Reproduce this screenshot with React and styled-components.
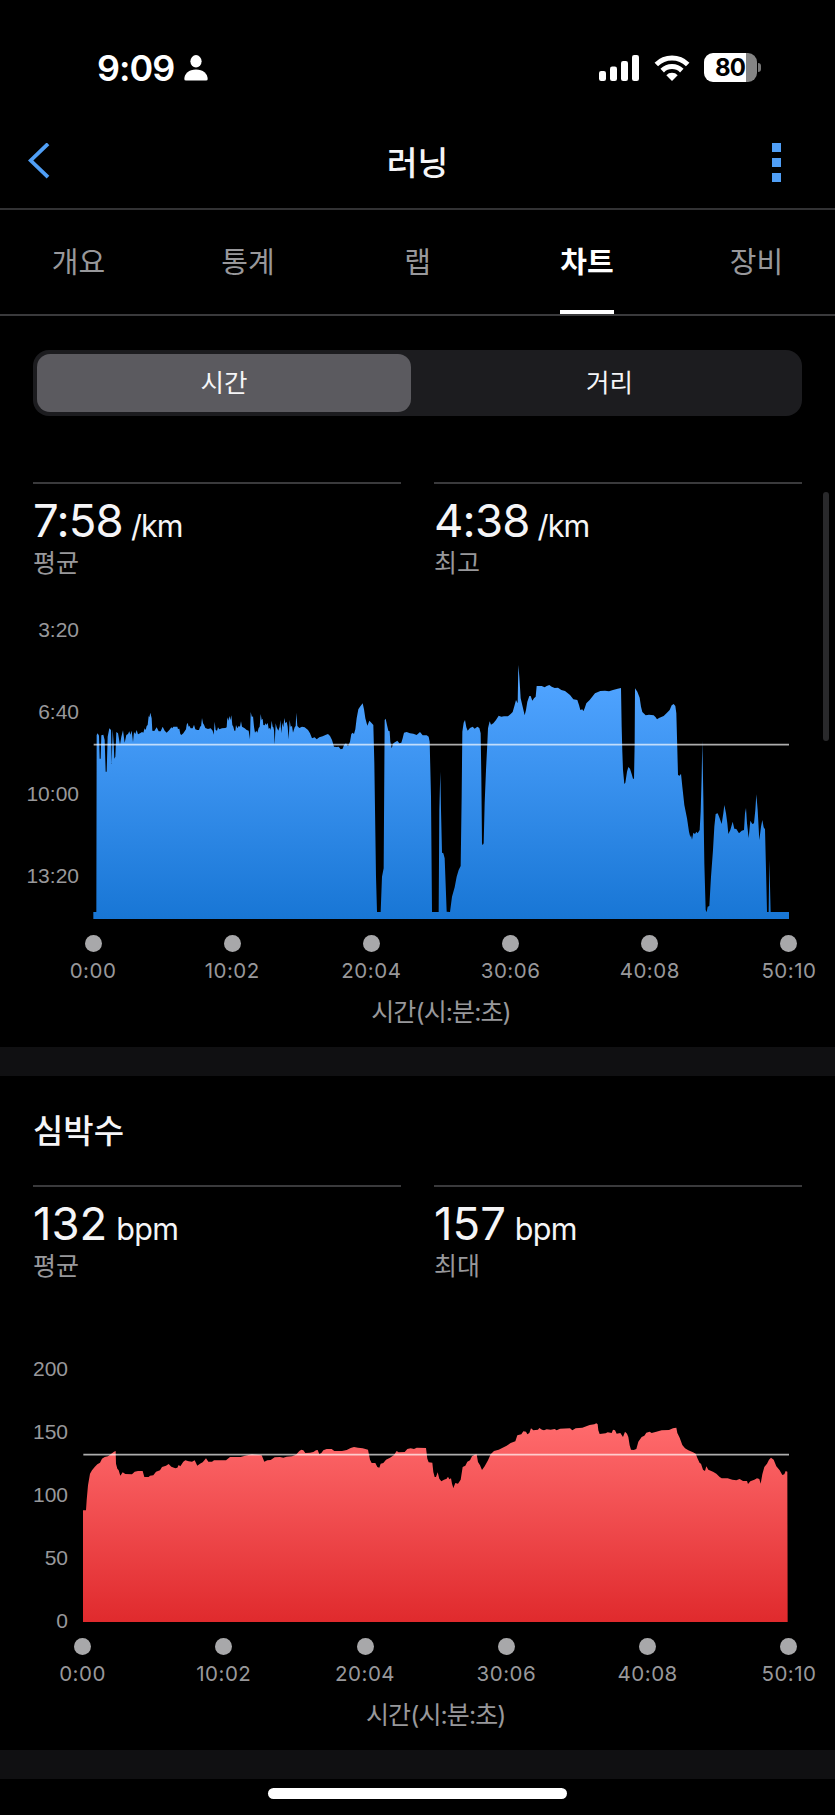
import React from 'react'
import styled, { createGlobalStyle } from 'styled-components'

const ticksX = ['0:00', '10:02', '20:04', '30:06', '40:08', '50:10']

const pace = {
  yLabels: ['3:20', '6:40', '10:00', '13:20'],
  stats: [
    { value: '7:58', unit: '/km', label: '평균' },
    { value: '4:38', unit: '/km', label: '최고' },
  ],
  // three samples per pixel
  points: `280,906 289,906 290,375 293,370 297,377 299,446 302,446 304,376 310,374 314,390 317,485 320,485
    323,380 328,355 333,360 335,462 338,358 341,400 343,446 346,440 349,366 354,370 360,404 364,380
    369,361 374,398 379,375 384,372 388,364 391,374 395,362 399,396 402,366 406,372 410,360 414,373
    420,370 426,366 430,368 434,355 437,360 440,348 443,345 446,318 448,322 451,308 455,325 457,362
    463,363 470,352 476,364 482,364 488,350 494,362 500,368 508,360 514,352 517,355 520,350 532,350
    534,357 538,356 541,372 544,375 550,370 558,358 560,344 563,338 566,350 568,347 572,355 578,355
    582,344 586,358 592,360 597,360 601,348 603,350 606,324 609,340 612,344 616,354 624,357 632,355
    638,362 641,374 644,335 647,360 651,362 654,352 658,358 666,355 676,354 680,352 682,322 685,332
    688,318 691,330 694,316 697,345 700,350 703,362 706,362 708,345 712,355 716,348 720,350 723,334
    726,350 734,355 740,360 746,362 750,388 752,306 756,322 759,318 762,350 765,368 769,362 772,368
    776,354 779,350 782,312 785,330 788,326 790,345 794,346 797,340 800,345 803,338 806,356 810,354
    812,360 815,332 818,350 820,352 822,360 824,404 827,340 830,352 835,362 839,350 841,330 844,370
    847,338 850,352 853,324 856,340 860,335 863,350 866,388 869,330 872,350 876,348 879,368 884,352
    887,348 889,308 892,348 898,354 906,350 914,352 924,360 930,370 936,385
    944,382 950,388 958,382 968,379 978,374 984,372 990,378 996,390 1002,410 1010,411 1016,410 1022,418
    1028,416 1032,405 1038,400 1044,409 1050,395 1054,372 1058,368 1062,372 1066,358 1070,325 1075,298
    1080,290 1088,280 1092,298 1096,325 1102,347 1108,332 1114,338 1120,345 1123,460 1128,800 1131,906
    1142,906 1146,800 1151,775 1154,330 1157,326 1161,345 1165,362 1169,364 1171,395 1175,415 1180,400
    1186,396 1192,392 1198,400 1204,398 1208,385 1212,368 1220,366 1230,370 1240,371 1250,375 1260,366
    1268,376 1280,376 1286,380 1289,395 1293,560 1296,906 1316,906 1318,600 1321,485 1323,600 1326,728
    1330,730 1334,745 1340,905 1350,906 1356,860 1364,832 1370,800 1376,780 1382,768 1385,560 1387,365
    1391,338 1395,330 1399,352 1403,362 1410,354 1418,350 1424,356 1432,350 1438,354 1442,370 1444,500
    1446,700 1448,706 1451,700 1454,580 1458,480 1462,400 1464,355 1469,334 1473,344 1480,340 1488,330
    1496,317 1504,320 1512,319 1524,319 1532,312 1538,306 1544,285 1548,270 1553,280 1555,165 1558,200
    1562,265 1568,290 1574,316 1578,300 1582,275 1588,258 1592,258 1597,272 1602,265 1607,260 1610,228
    1625,228 1634,232 1640,228 1648,225 1655,230 1664,234 1674,233 1684,240 1695,243 1710,255 1720,268
    1732,270 1737,285 1741,300 1747,298 1750,304 1754,295 1759,280 1769,270 1785,250 1801,243 1815,242
    1827,244 1839,240 1853,236 1863,234 1865,350 1867,425 1869,480 1873,522 1876,518 1881,485 1885,471
    1890,476 1895,492 1899,506 1902,506 1904,400 1905,235 1912,245 1919,263 1923,290 1927,306 1937,316
    1947,314 1961,316 1967,322 1971,328 1977,324 1991,318 2001,308 2009,300 2015,286 2021,282 2026,288
    2029,310 2032,420 2034,495 2039,497 2043,491 2047,530 2053,585 2061,625 2067,665 2071,682 2073,675
    2076,689 2080,668 2085,672 2089,665 2093,670 2099,660 2102,605 2105,500 2107,392 2110,560 2113,760
    2117,900 2120,906 2123,890 2128,888 2133,800 2139,720 2143,650 2147,612 2153,610 2159,625 2165,642
    2170,610 2173,585 2178,610 2182,640 2185,672 2191,660 2198,635 2203,656 2209,657 2217,670 2225,662
    2232,660 2235,610 2238,594 2241,640 2246,684 2251,632 2257,642 2262,640 2266,600 2269,553 2273,600
    2278,690 2283,650 2287,630 2291,652 2295,658 2298,780 2301,906 2306,906 2308,750 2312,906 2367,906
    2367,927 280,927`,
}

const heart = {
  yLabels: ['200', '150', '100', '50', '0'],
  stats: [
    { value: '132', unit: 'bpm', label: '평균' },
    { value: '157', unit: 'bpm', label: '최대' },
  ],
  points: `249,480 258,480 260,450 264,405 270,370 276,360 284,350 292,342 300,337 306,325 314,320 324,318
    332,312 342,304 347,302 348,340 352,355 356,360 361,376 368,366 376,371 396,372 404,364 414,362
    428,362 433,380 446,380 450,376 460,375 468,364 480,360 486,350 498,346 506,341 514,349 526,354
    532,352 536,344 541,348 550,334 556,330 566,333 576,334 584,330 592,346 600,340 608,336 618,324
    625,334 636,334 642,330 678,330 690,320 722,320 735,316 756,312 785,315 793,334 802,330 812,329
    824,321 840,320 850,322 860,319 876,318 888,313 898,302 904,298 910,300 916,308 930,307 940,305
    948,300 953,299 958,312 964,308 970,300 980,296 995,296 1003,302 1026,302 1040,299 1052,293
    1062,290 1074,292 1088,294 1104,298 1110,328 1115,338 1126,338 1132,350 1138,352 1142,340 1150,338
    1158,328 1170,322 1182,314 1190,302 1196,306 1214,305 1222,296 1232,294 1242,296 1250,292 1278,293
    1282,325 1286,336 1297,337 1300,365 1304,380 1308,380 1313,366 1318,385 1324,393 1332,388 1340,385
    1344,379 1348,387 1353,384 1356,400 1360,413 1366,398 1374,400 1382,388 1388,350 1396,346 1402,334
    1410,330 1416,318 1424,313 1430,312 1434,335 1440,345 1446,359 1454,348 1464,330 1472,312 1482,302
    1496,298 1508,292 1520,286 1532,278 1546,273 1552,255 1564,252 1570,243 1578,244 1582,252 1588,248
    1593,234 1600,240 1614,238 1618,233 1626,238 1632,240 1640,237 1652,238 1664,236 1670,240 1680,235
    1710,234 1717,240 1727,234 1747,232 1759,228 1769,224 1783,222 1789,219 1793,222 1795,240 1799,251
    1817,249 1823,246 1835,248 1839,238 1845,240 1850,250 1861,248 1869,260 1875,244 1881,250 1885,260
    1889,285 1893,298 1901,299 1909,296 1915,274 1925,260 1933,256 1939,247 1949,244 1955,248 1969,244
    1985,240 2007,239 2019,234 2029,232 2032,248 2039,262 2047,284 2055,294 2065,300 2079,306 2087,310
    2093,325 2099,338 2103,340 2109,358 2115,362 2119,348 2125,358 2139,364 2149,370 2159,380 2165,384
    2183,384 2197,388 2209,390 2219,386 2229,392 2241,392 2244,401 2251,393 2263,388 2271,384 2278,386
    2282,400 2287,372 2293,350 2301,340 2307,328 2313,322 2321,328 2329,348 2339,360 2347,374 2353,372
    2357,362 2362,364 2363,815 249,815`,
}

const Stats = ({ items, height, tight }) => (
  <StatRow $height={height}>
    {items.map((item) => (
      <Stat key={item.label}>
        <StatValue $tight={tight}>
          {item.value} <small>{item.unit}</small>
        </StatValue>
        <StatLabel>{item.label}</StatLabel>
      </Stat>
    ))}
  </StatRow>
)

const XAxis = ({ start }) => (
  <Axis $start={start}>
    <TickRow>
      {ticksX.map((tick) => (
        <Tick key={tick}>
          <Dot />
          <span>{tick}</span>
        </Tick>
      ))}
    </TickRow>
    <AxisTitle>시간(시:분:초)</AxisTitle>
  </Axis>
)

const App = () => {
  return (
    <Screen>
      <GlobalStyle />
      <StatusBar>
        <Clock>
          9:09
          <svg width='24' height='26' viewBox='0 0 24 26' fill='#fff'>
            <ellipse cx='12' cy='6.3' rx='5.6' ry='6.2' />
            <path d='M.3 24C.3 18.6 5 14.4 12 14.4S23.700 18.600 23.700 24Q23.700 25.600 22 25.600H2Q.3 25.600 .3 24Z' />
          </svg>
        </Clock>
        <StatusIcons>
          <svg width='41' height='28' viewBox='0 0 41 28' fill='#fff'>
            <rect x='0' y='17' width='7' height='10' rx='2.200' />
            <rect x='11' y='12.500' width='7' height='14.500' rx='2.200' />
            <rect x='22' y='7' width='7' height='20' rx='2.200' />
            <rect x='33' y='1' width='7' height='26' rx='2.200' />
          </svg>
          <svg width='36' height='28' viewBox='0 0 36 28'>
            <g fill='none' stroke='#fff' strokeWidth='5'>
              <path d='M2.300 10.500A22.500 22.500 0 0 1 33.700 10.500' />
              <path d='M8.200 16.600A14 14 0 0 1 27.800 16.600' />
            </g>
            <path d='M18 27L12.300 21.200A8 8 0 0 1 23.700 21.200Z' fill='#fff' />
          </svg>
          <Battery>
            <BatteryBody>80</BatteryBody>
            <BatteryCap />
          </Battery>
        </StatusIcons>
      </StatusBar>

      <NavBar>
        <svg width='22' height='38' viewBox='0 0 22 38' fill='none' stroke='#509ff6' strokeWidth='3.800'>
          <path d='M20 .8L2.700 17.500L20 34.200' />
        </svg>
        <h1>러닝</h1>
        <MenuDots>
          <i />
          <i />
          <i />
        </MenuDots>
      </NavBar>

      <Tabs>
        <Tab>개요</Tab>
        <Tab>통계</Tab>
        <Tab>랩</Tab>
        <Tab $active>차트</Tab>
        <Tab>장비</Tab>
      </Tabs>

      <Segmented>
        <Segment $active>시간</Segment>
        <Segment>거리</Segment>
      </Segmented>

      <Stats items={pace.stats} height={107} tight />
      <Chart $height={330}>
        <YAxis $width={79} $row={82}>
          {pace.yLabels.map((label) => (
            <span key={label}>{label}</span>
          ))}
        </YAxis>
        <svg width='696' height='259' viewBox='279 150 2088 777'>
          <defs>
            <linearGradient id='pace' gradientUnits='userSpaceOnUse' x1='0' y1='225' x2='0' y2='927'>
              <stop offset='0' stopColor='#4fa3ff' />
              <stop offset='1' stopColor='#1876d5' />
            </linearGradient>
          </defs>
          <polygon points={pace.points} fill='url(#pace)' />
          <path d='M281 404H2367' stroke='#fff' strokeOpacity='.68' strokeWidth='5' />
        </svg>
      </Chart>
      <XAxis start={93} />

      <Band />

      <SectionTitle>심박수</SectionTitle>
      <Stats items={heart.stats} height={152} />
      <Chart $height={285}>
        <YAxis $width={68} $row={63.1}>
          {heart.yLabels.map((label) => (
            <span key={label}>{label}</span>
          ))}
        </YAxis>
        <svg width='706' height='202' viewBox='249 209 2118 606'>
          <defs>
            <linearGradient id='heart' gradientUnits='userSpaceOnUse' x1='0' y1='219' x2='0' y2='815'>
              <stop offset='0' stopColor='#ff6b6d' />
              <stop offset='1' stopColor='#e02a2d' />
            </linearGradient>
          </defs>
          <polygon points={heart.points} fill='url(#heart)' />
          <path d='M250 313H2367' stroke='#fff' strokeOpacity='.68' strokeWidth='5' />
        </svg>
      </Chart>
      <XAxis start={82.5} />

      <Band />
      <HomeIndicator />
      <ScrollThumb />
    </Screen>
  )
}

const GlobalStyle = createGlobalStyle`
  * {
    box-sizing: border-box;
  }
  body {
    margin: 0;
    background: #000;
  }
`
const Screen = styled.div`
  position: relative;
  display: flex;
  flex-direction: column;
  width: 835px;
  height: 1815px;
  overflow: hidden;
  background: #000;
  color: #f5f5f7;
  font-family: Inter, 'Noto Sans CJK KR', sans-serif;
  svg {
    display: block;
    flex: none;
  }
`
const StatusBar = styled.header`
  display: flex;
  justify-content: space-between;
  align-items: center;
  height: 135px;
  padding: 0 74px 0 97px;
`
const Clock = styled.div`
  display: flex;
  align-items: center;
  gap: 10px;
  color: #fff;
  font-size: 36px;
  font-weight: 600;
  line-height: 36px;
  letter-spacing: -1px;
`
const StatusIcons = styled.div`
  display: flex;
  align-items: center;
  gap: 14px;
`
const Battery = styled.div`
  display: flex;
  align-items: center;
  gap: 1px;
`
const BatteryBody = styled.div`
  width: 53px;
  height: 29px;
  padding-right: 1px;
  border-radius: 9px;
  background: linear-gradient(90deg, #fff 42px, #848484 42px);
  color: #000;
  font-size: 24px;
  font-weight: 700;
  line-height: 29px;
  letter-spacing: -0.8px;
  text-align: center;
`
const BatteryCap = styled.div`
  width: 3px;
  height: 9px;
  border-radius: 0 3px 3px 0;
  background: #777;
`
const NavBar = styled.nav`
  display: flex;
  justify-content: space-between;
  align-items: center;
  height: 75px;
  padding: 0 54px 20px 28px;
  border-bottom: 2px solid #323234;
  h1 {
    margin: 2px 0 0 13px;
    font-size: 33.5px;
    font-weight: 500;
    line-height: 40px;
  }
`
const MenuDots = styled.div`
  display: grid;
  gap: 6px;
  padding-top: 2px;
  i {
    width: 9px;
    height: 9px;
    background: #509ff6;
  }
`
const Tabs = styled.div`
  display: grid;
  grid-template-columns: repeat(5, 169.5px);
  justify-content: center;
  justify-items: center;
  height: 106px;
  border-bottom: 2px solid #3a3a3c;
`
const Tab = styled.div`
  height: 104px;
  border-bottom: 4px solid ${(props) => (props.$active ? '#fff' : 'transparent')};
  color: ${(props) => (props.$active ? '#fff' : '#98989b')};
  font-size: 29px;
  font-weight: ${(props) => (props.$active ? 700 : 400)};
  line-height: 106px;
`
const Segmented = styled.div`
  display: grid;
  grid-template-columns: 374px 1fr;
  gap: 6px;
  height: 66px;
  margin: 34px 33px 66px;
  padding: 4px 0 4px 4px;
  border-radius: 16px;
  background: #1c1c1f;
`
const Segment = styled.div`
  border-radius: 13px;
  background: ${(props) => (props.$active ? '#5b5a5f' : 'none')};
  font-size: 25.5px;
  line-height: 57px;
  text-align: center;
`
const StatRow = styled.div`
  display: grid;
  grid-template-columns: 1fr 1fr;
  gap: 33px;
  height: ${(props) => props.$height}px;
  padding: 0 33px;
`
const Stat = styled.div`
  border-top: 2px solid #3a3a3c;
`
const StatValue = styled.div`
  height: 64px;
  font-size: 45.5px;
  line-height: 73px;
  letter-spacing: ${(props) => (props.$tight ? '-0.8px' : '0')};
  white-space: nowrap;
  small {
    margin-left: -4px;
    font-size: 30.5px;
    font-weight: 400;
    letter-spacing: ${(props) => (props.$tight ? '-0.9px' : '-0.6px')};
  }
`
const StatLabel = styled.div`
  color: #98989b;
  font-size: 25px;
  line-height: 31px;
`
const Chart = styled.div`
  display: flex;
  justify-content: space-between;
  align-items: flex-end;
  height: ${(props) => props.$height}px;
  padding-right: 46px;
`
const YAxis = styled.div`
  display: grid;
  align-self: flex-start;
  grid-auto-rows: ${(props) => props.$row}px;
  align-items: center;
  width: ${(props) => props.$width}px;
  height: 0;
  color: #98989b;
  font-family: 'Liberation Sans', sans-serif;
  font-size: 21px;
  text-align: right;
`
const Axis = styled.div`
  height: 128px;
  padding: 16px 6px 0 ${(props) => props.$start - 40}px;
  color: #98989b;
`
const TickRow = styled.div`
  display: flex;
  justify-content: space-between;
`
const Tick = styled.div`
  display: flex;
  flex-direction: column;
  align-items: center;
  width: 80px;
  gap: 7px;
  font-size: 20.5px;
  line-height: 24px;
  letter-spacing: 0.5px;
`
const Dot = styled.div`
  width: 17px;
  height: 17px;
  border-radius: 50%;
  background: #a8a8aa;
`
const AxisTitle = styled.div`
  padding-top: 14px;
  font-size: 25px;
  line-height: 30px;
  letter-spacing: -0.9px;
  text-align: center;
`
const Band = styled.div`
  height: 29px;
  background: #101012;
`
const SectionTitle = styled.h2`
  height: 109px;
  margin: 0;
  padding-left: 33px;
  font-size: 33px;
  font-weight: 500;
  line-height: 111px;
`
const HomeIndicator = styled.div`
  width: 299px;
  height: 11px;
  margin: 9px auto 0;
  border-radius: 6px;
  background: #fff;
`
const ScrollThumb = styled.div`
  position: absolute;
  top: 492px;
  right: 6px;
  width: 6px;
  height: 249px;
  border-radius: 3px;
  background: #29292b;
`
export default App
